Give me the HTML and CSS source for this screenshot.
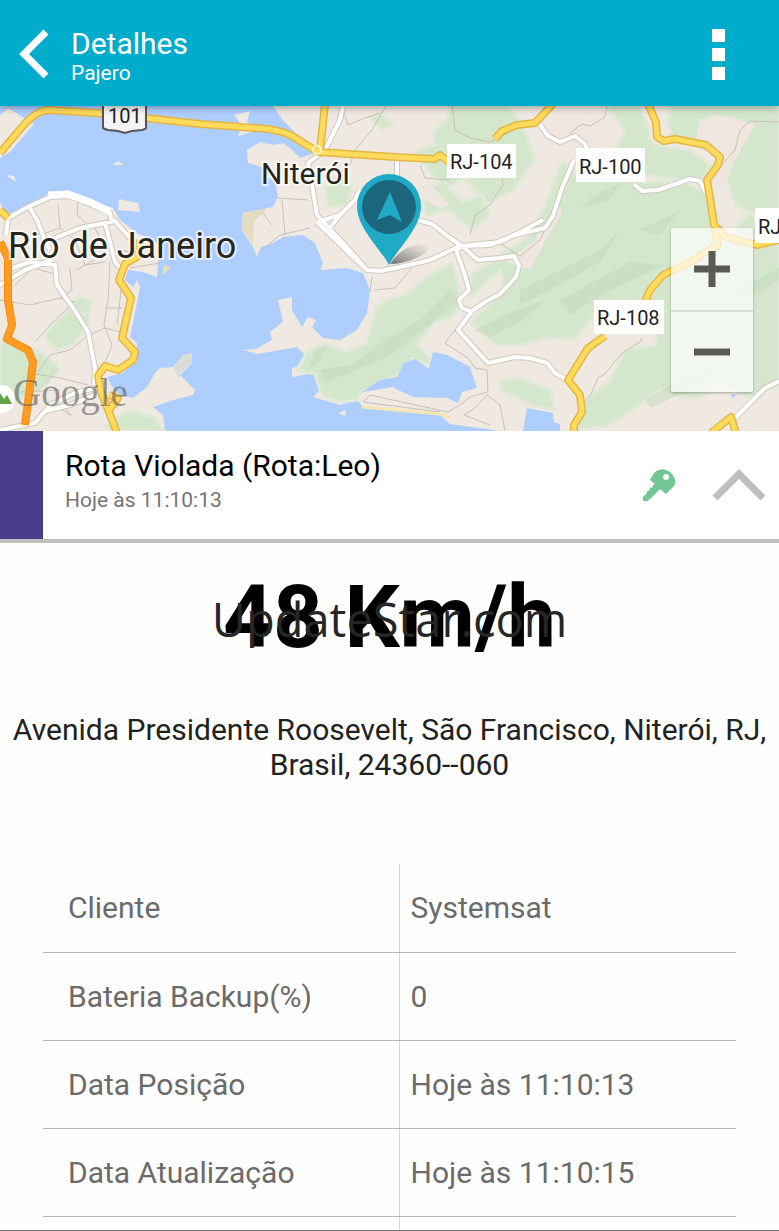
FILE: index.html
```html
<!DOCTYPE html>
<html lang="pt-BR">
<head>
    <meta charset="UTF-8">
    <meta name="viewport" content="width=device-width, initial-scale=1.0">
    <title>Detalhes - Pajero</title>
    <link rel="stylesheet" href="styles.css">
</head>
<body>
    <header>
        <button type="button" class="back" aria-label="Voltar">
            <svg width="32" height="50" viewBox="0 0 32 50"><path d="M27 3 L5 25 L27 47" fill="none" stroke="#fff" stroke-width="7"/></svg>
        </button>
        <div class="title">
            <h1>Detalhes</h1>
            <p>Pajero</p>
        </div>
        <button type="button" class="menu" aria-label="Menu">
            <span></span><span></span><span></span>
        </button>
    </header>

    <div class="map">
        <svg class="map-canvas" viewBox="0 106 779 325" preserveAspectRatio="xMidYMid slice">
            <defs>
                <linearGradient id="pinShadow" x1="0" y1="1" x2="1" y2="0">
                    <stop offset="0" stop-color="#555" stop-opacity="0.8"/>
                    <stop offset="1" stop-color="#777" stop-opacity="0"/>
                </linearGradient>
                <path id="streets" d="M6 235 L8 218 L30 206 L50 197 L68 196 L85 202 L110 213 L112 222 M30 208 L38 222 L44 238 L50 250 M6 270 L30 262 L55 265 L57 285 L76 312 L88 332 L95 368 L94 385 M50 240 L80 228 L115 221 L130 238 M105 222 L115 262 L120 268 M0 285 L25 270 L52 260
                    M0 430 L35 423 L50 405 L75 393 L95 388 M45 411 L70 405 L95 395
                    M343 106 L340 120 L325 150 L308 163 L312 185 L317 215 L345 245 L367 270 L380 271 L405 266 L430 260 L460 246 L490 245 L515 235 L545 228 L553 216 L562 188 L574 160
                    M317 222 L355 259 L367 270 M318 222 L340 215 L355 200 L360 190 M330 228 L340 215 M397 160 L397 178
                    M418 220 L432 224 L450 238 L462 246 L456 250 L465 275 L469 290 L459 300 L462 308 L472 312
                    M462 246 L478 260 L500 258 L514 256 L519 266 L516 277 L500 294 L485 302 L472 311 L458 330 L488 363 L515 357 L530 358 L547 363 L555 373 L567 380
                    M462 246 L500 242 L520 232 L543 220
                    M538 122 L548 136 L560 142 L575 136 L584 143 L588 150 M634 184 L642 191 L658 190 L690 179 L700 181 L706 193 M733 420 L765 388 L779 381"/>
                <path id="highways" d="M0 153 L22 127 Q36 110 50 110 L110 114 L200 124 L255 128 Q285 129 300 141 L318 152 L395 157 L435 159 L440 155 L450 163
                    M325 104 L320 150 M495 139 L502 131 L517 125 L535 123 L553 104
                    M648 104 L656 122 L657 137 L664 141 L675 139 L706 145 L720 157 L718 165 L707 180 L711 205 L714 225 L726 237 L757 245 L779 240
                    M714 228 L718 245 L690 262 L663 275 L650 290 L645 302 M605 336 L588 348 L568 380 L580 395 L582 412 L574 425 L574 433
                    M0 210 L8 218 M140 240 L138 256 L125 264 L119 280 L131 298 L122 338 L135 352 L133 360 L118 370 L105 366 L98 376 L101 392 L109 412 L117 433 M109 395 L118 398 L109 410
                    M711 433 L731 417 L736 433"/>
                <path id="orange" d="M0 242 L8 258 L8 300 L12 325 L7 339 L28 350 L33 362 L29 395 L25 425"/>
            </defs>
            <rect x="0" y="106" width="779" height="325" fill="#aeceff"/>

            <!-- land -->
            <g fill="#efe9e2">
                <path d="M0 115 L8 108 L34 124 L10 152 L0 158Z"/>
                <path d="M0 203 L7 215 L50 193 L70 193 L113 208 L120 220 L137 233 L157 243 L158 262 L157 277 L143 272 L128 270 L125 280 L133 287 L137 280 L140 287 L135 313 L130 337 L137 343 L136 360 L123 373 L107 377 L113 388 L120 395 L133 398 L147 387 L155 373 L160 368 L173 367 L183 355 L192 353 L192 363 L180 375 L195 390 L193 395 L173 400 L153 407 L163 415 L165 431 L0 431Z"/>
                <path d="M273 106 L283 120 L300 138 L318 152 L300 158 L290 148 L283 143 L274 145 L260 142 L247 150 L248 163 L262 167 L266 177 L275 180 L278 197 L273 207 L243 213 L242 230 L253 247 L257 257 L261 247 L273 243 L283 237 L303 235 L315 243 L323 263 L320 270 L347 268 L363 273 L370 290 L367 313 L357 330 L340 340 L323 338 L312 327 L316 320 L308 317 L302 327 L292 310 L292 297 L278 300 L283 322 L270 332 L272 340 L256 349 L243 350 L257 354 L297 347 L305 355 L307 363 L292 368 L292 377 L313 373 L320 390 L313 397 L340 405 L357 400 L363 407 L440 415 L450 424 L500 431 L779 431 L779 106Z"/>
                <path d="M234 115 L250 111 L247 122 L258 130 L238 136 L242 126Z"/>
                <path d="M119 199 L138 203 L140 212 L118 210Z"/>
                <path d="M112 165 L118 161 L124 165Z"/>
                <path d="M6 175 L14 176 L16 182Z"/>
                <path d="M338 413 L346 410 L345 416Z"/>
                <path d="M164 265 L171 267 L162 276Z" fill="#e5e0b9"/>
            </g>
            <path d="M173 367 L183 355 L192 353 L192 363 L180 373 L180 380Z" fill="#d9ddd5"/>
            <path d="M243 213 L268 208 L254 222 L253 244 L242 230Z" fill="#e4dcc0"/>

            <!-- vegetation -->
            <g class="green">
                <path d="M0 345 L10 330 L22 345 L40 352 L58 365 L48 383 L20 400 L0 408Z"/>
                <path d="M44 335 L60 318 L75 305 L90 310 L88 328 L72 345 L55 350Z"/>
                <path d="M68 305 L80 296 L92 300 L90 312 L76 316Z"/>
                <path d="M105 425 L130 410 L155 418 L164 431 L110 431Z"/>
                <path d="M377 306 L390 298 L405 295 L425 278 L452 262 L460 290 L458 310 L450 318 L435 322 L417 345 L430 358 L430 366 L412 358 L397 375 L362 392 L357 400 L338 402 L322 396 L315 374 L297 370 L307 352 L325 343 L345 352 L366 343Z"/>
                <path d="M470 275 L490 262 L530 235 L545 205 L562 160 L582 180 L620 175 L650 182 L690 180 L710 190 L725 240 L779 180 L779 385 L750 398 L720 385 L695 400 L660 390 L640 405 L610 425 L575 431 L585 400 L610 380 L625 350 L655 345 L660 310 L625 300 L598 310 L575 340 L550 338 L520 345 L495 345 L470 322 L505 290 L500 270 L470 298Z"/>
                <path d="M452 106 L510 106 L525 130 L535 160 L514 190 L485 205 L465 178 L445 190 L428 170 L415 150 L435 145 L433 132 L445 120Z"/>
                <path d="M605 106 L640 106 L655 145 L690 150 L710 165 L700 182 L640 175 L610 160 L625 130Z"/>
                <path d="M670 106 L779 106 L779 230 L735 205 L720 160 L695 142 L665 140Z"/>
                <path d="M422 188 L445 182 L462 202 L482 195 L490 215 L472 230 L448 210 L425 215Z"/>
                <path d="M325 188 L340 178 L352 185 L348 205 L328 208Z"/>
                <path d="M370 119 L380 112 L395 125 L382 130Z"/>
                <path d="M500 380 L520 378 L550 390 L555 410 L530 405 L518 398 L500 390Z"/>
            </g>
            <g class="hills">
                <path d="M385 340 L420 320 L450 290 L458 300 L430 325 L390 355 L345 375 L325 382 L320 370 L350 365Z"/>
                <path d="M520 290 L560 270 L600 250 L620 230 L600 262 L560 285 L520 305Z"/>
                <path d="M475 330 L510 312 L545 300 L520 322 L490 337Z"/>
                <path d="M590 198 L622 182 L608 200 L582 208Z"/>
                <path d="M560 300 L630 262 L665 265 L610 290 L570 315Z"/>
                <path d="M645 400 L690 375 L725 365 L690 390 L650 408Z"/>
                <path d="M640 230 L680 210 L660 235Z"/>
                <path d="M735 290 L779 268 L779 280 L745 300Z"/>
                <path d="M45 383 L55 366 L60 370 L40 390 L20 400Z"/>
                <path d="M315 350 L328 345 L320 360 L308 370Z"/>
            </g>
            <!-- built-up patches inside the green -->
            <g fill="#efe6df">
                <path d="M700 120 L715 115 L735 118 L755 125 L735 160 L725 185 L705 178 L718 160 L695 142Z"/>
                <path d="M418 190 L432 186 L450 205 L440 208 L425 200Z"/>
                <path d="M550 125 L580 112 L605 112 L622 125 L600 148 L580 155 L548 140Z"/>
                <path d="M648 138 L660 118 L672 130 L662 145Z"/>
                <path d="M680 180 L705 178 L722 185 L712 198 L695 188Z"/>
                <path d="M552 212 L560 206 L562 214 L550 232 L530 270 L505 262 L535 240Z"/>
            </g>

            <!-- lagoons -->
            <g fill="#aeceff">
                <path d="M362 392 L380 380 L397 377 L404 363 L415 359 L429 369 L433 352 L447 355 L470 367 L477 388 L462 392 L458 403 L447 398 L413 397 L392 387 L370 391Z"/>
                <path d="M527 408 L553 413 L554 422 L560 424 L560 431 L523 431Z"/>
                <path d="M730 395 L737 394 L733 398Z"/>
            </g>
            <path d="M362 407 L440 414 L450 418" fill="none" stroke="#f6e7b0" stroke-width="3"/>

            <!-- minor streets -->
            <path class="lane" d="M33 213 L40 235 L60 228 L58 205 M78 200 L77 215 L92 228 L108 220 M60 228 L75 240 L85 265 L105 262 M95 228 L105 248 L130 252
                M0 300 L30 305 L60 298 L74 302 L50 325 L35 342 M15 285 L33 268 L58 275 M70 268 L72 290 L60 298
                M110 262 L108 300 L104 325 L112 345 L104 365 M105 308 L122 308 M122 270 L120 300 L117 325 M85 337 L105 328 L120 332 M38 372 L50 355 L70 350 L85 338 M36 374 L60 378 L88 385
                M160 263 L130 268 M76 270 L95 260 M20 392 L60 390 M62 410 L72 415 M65 405 L70 417
                M342 106 L348 125 L365 118 L380 113 M386 106 L372 130 L355 150 L350 165 M278 198 L308 200 M282 200 L285 235 M262 250 L280 235 L310 228 M262 212 L272 225 M370 292 L372 277 M374 290 L395 288 L412 268
                M452 106 L455 130 L470 138 L490 142 L510 132 M420 165 L425 178 L450 180 M500 165 L503 185 L490 205 L475 215 L470 235
                M570 133 L582 124 L590 126 L605 117 L607 106 M552 215 L540 240 L520 256 L500 243 M715 172 L735 150 L740 130 L750 121 L779 122
                M455 330 L445 343 L468 358 L475 368 L487 370 L488 392 L470 397 L460 405 L448 412 L370 395 L363 402 L440 412 M487 395 L475 408 L464 415 L490 425 M487 395 L500 405 L505 431
                M642 338 L640 342 L622 353 L605 374 L598 378 L590 396 L584 402"/>

            <!-- main streets and highways -->
            <use href="#streets" class="street-edge"/>
            <use href="#streets" class="street"/>
            <path d="M48 195 L68 194 L90 202 L110 212" fill="none" stroke="#fff" stroke-width="7"/>
            <use href="#highways" class="road-edge"/>
            <use href="#highways" class="road"/>
            <use href="#orange" class="orange-edge"/>
            <use href="#orange" class="orange"/>
            <circle cx="317" cy="150" r="4" fill="none" stroke="#fff6c8" stroke-width="2"/>

            <!-- road shields -->
            <path d="M103 104 V128 Q104 129 108 130 L118 131 L125 133 L132 131 L142 130 Q146 129 146 128 V104Z" fill="#f4f4f4" stroke="#555" stroke-width="2"/>
            <g class="shield">
                <rect x="447" y="144" width="69" height="34"/>
                <rect x="576" y="148" width="69" height="34"/>
                <rect x="594" y="300" width="70" height="34"/>
                <rect x="755" y="208" width="60" height="35"/>
                <text x="108" y="123">101</text>
                <text x="450" y="169">RJ-104</text>
                <text x="579" y="174">RJ-100</text>
                <text x="597" y="325">RJ-108</text>
                <text x="758" y="234">RJ</text>
            </g>

            <text class="city" x="261" y="184">Niterói</text>
            <text class="city city-big" x="8" y="258">Rio de Janeiro</text>

            <circle cx="1" cy="399" r="14" fill="#fff"/>
            <path d="M-8 404 L0 393 L4 399 L7 395 L12 404Z" fill="#5fa544"/>
            <text class="logo" x="13" y="406">Google</text>

            <!-- vehicle marker -->
            <path d="M390 264 Q404 242 428 245 Q430 253 414 259 Q402 264 390 264Z" fill="url(#pinShadow)"/>
            <path d="M389 265 C380 248 357 228 357 206 A32 32 0 0 1 421 206 C421 228 398 248 389 265Z" fill="#20aac6"/>
            <circle cx="389" cy="207" r="27" fill="#1c677d"/>
            <path d="M390 192 L402 222 L390 215 L377 220Z" fill="#20aac6"/>
        </svg>
        <div class="zoom">
            <button type="button" aria-label="Aproximar">
                <svg width="36" height="36" viewBox="0 0 36 36"><path d="M0 18 H36 M18 0 V36" stroke="#585b56" stroke-width="7"/></svg>
            </button>
            <button type="button" aria-label="Afastar">
                <svg width="36" height="36" viewBox="0 0 36 36"><path d="M0 18 H36" stroke="#585b56" stroke-width="7"/></svg>
            </button>
        </div>
    </div>

    <div class="event">
        <div class="event-color"></div>
        <div class="event-text">
            <h2>Rota Violada (Rota:Leo)</h2>
            <p>Hoje às 11:10:13</p>
        </div>
        <svg class="key" width="34" height="34" viewBox="0 0 34 34">
            <path fill="#71c694" fill-rule="evenodd" d="M8 12 L12 5 Q20 -2 28 4 Q36 12 32 18 L24 26 L18 21 L8 31 Q5 34 2 33 Q0 32 1 29 L5 25 L5 23 L8 22 L8 20 L11 19 L11 17 L13 16Z M24 6 A3 3 0 1 0 24 12 A3 3 0 1 0 24 6Z"/>
        </svg>
        <button type="button" class="collapse" aria-label="Recolher">
            <svg width="54" height="34" viewBox="0 0 54 34"><path d="M3 30 L27 6 L51 30" fill="none" stroke="#bfbfbf" stroke-width="7"/></svg>
        </button>
    </div>

    <main>
        <div class="speed">
            <strong>48 Km/h</strong>
            <span class="watermark">UpdateStar.com</span>
        </div>
        <p class="address">Avenida Presidente Roosevelt, São Francisco, Niterói, RJ, Brasil, 24360--060</p>
        <table>
            <tbody>
                <tr>
                    <th scope="row">Cliente</th>
                    <td>Systemsat</td>
                </tr>
                <tr>
                    <th scope="row">Bateria Backup(%)</th>
                    <td>0</td>
                </tr>
                <tr>
                    <th scope="row">Data Posição</th>
                    <td>Hoje às 11:10:13</td>
                </tr>
                <tr>
                    <th scope="row">Data Atualização</th>
                    <td>Hoje às 11:10:15</td>
                </tr>
                <tr>
                    <th scope="row"></th>
                    <td></td>
                </tr>
            </tbody>
        </table>
    </main>
</body>
</html>
```
FILE: styles.css
```css
* {
    box-sizing: border-box;
}
body {
    font-family: Roboto, sans-serif;
    margin: 0;
    height: 100vh;
    display: flex;
    flex-direction: column;
    overflow: hidden;
    background-color: #fefefe;
    border-bottom: 1px solid #777;
}
h1, h2, p {
    margin: 0;
    font-weight: 400;
}
button {
    padding: 0;
    border: none;
    background: none;
    cursor: pointer;
}
svg {
    display: block;
}
header {
    flex: none;
    height: 106px;
    display: flex;
    align-items: center;
    padding: 2px 52px 0 19px;
    background-color: #00accb;
    color: white;
    position: relative;
    z-index: 1;
    box-shadow: 0 1px 8px rgba(0, 0, 0, 0.4);
}
.title {
    flex: 1;
    margin-left: 20px;
    padding-top: 4px;
}
.title h1 {
    font-size: 30px;
    line-height: 34px;
}
.title p {
    font-size: 21px;
    line-height: 24px;
}
.menu {
    display: flex;
    flex-direction: column;
    gap: 6px;
    padding: 0 2px;
}
.menu span {
    width: 13px;
    height: 13px;
    background-color: white;
}
.map {
    flex: none;
    height: 325px;
    position: relative;
}
.map-canvas {
    width: 100%;
    height: 100%;
}
.green {
    fill: #d4e7cd;
    stroke: #e2e9d9;
    stroke-width: 3;
    stroke-linejoin: round;
}
.hills {
    fill: #c4dbba;
    opacity: 0.5;
}
.lane, .street-edge, .street, .road-edge, .road, .orange-edge, .orange {
    fill: none;
    stroke-linejoin: round;
}
.lane {
    stroke: #c9c1b9;
    stroke-width: 1px;
}
.street-edge {
    stroke: #d0c8be;
    stroke-width: 6;
}
.street {
    stroke: white;
    stroke-width: 4;
}
.road-edge {
    stroke: #e5b544;
    stroke-width: 8;
}
.road {
    stroke: #ffdb5c;
    stroke-width: 5;
}
.orange-edge {
    stroke: #f08c18;
    stroke-width: 8;
}
.orange {
    stroke: #ff9c20;
    stroke-width: 6;
}
.shield rect {
    fill: white;
}
.shield text {
    font-size: 20px;
    fill: #222;
}
.city {
    font-size: 30px;
    fill: #26251c;
    stroke: rgba(255, 255, 255, 0.7);
    stroke-width: 4px;
    paint-order: stroke;
}
.city-big {
    font-size: 36px;
}
.logo {
    font-family: "Liberation Serif", serif;
    font-size: 39px;
    fill: rgba(90, 90, 90, 0.6);
}
.zoom {
    position: absolute;
    right: 26px;
    bottom: 39px;
    width: 82px;
    border-radius: 2px;
    background-color: rgba(255, 255, 255, 0.7);
    box-shadow: 0 1px 3px rgba(0, 0, 0, 0.3);
}
.zoom button {
    width: 100%;
    height: 82px;
    display: flex;
    align-items: center;
    justify-content: center;
}
.zoom button + button {
    border-top: 2px solid rgba(190, 200, 190, 0.5);
}
.event {
    flex: none;
    display: flex;
    align-items: center;
    height: 112px;
    padding-right: 13px;
    background-color: white;
    border-bottom: 4px solid #bfbfbf;
}
.event-color {
    align-self: stretch;
    width: 43px;
    background-color: #483d8b;
}
.event-text {
    flex: 1;
    padding: 0 0 6px 22px;
}
.event-text h2 {
    font-size: 30px;
    line-height: 36px;
    color: #000;
}
.event-text p {
    font-size: 21px;
    line-height: 32px;
    color: #757575;
}
.key {
    margin-right: 36px;
}
main {
    flex: 1;
    min-height: 0;
    overflow: hidden;
}
.speed {
    position: relative;
    margin-top: 24px;
    text-align: center;
    color: #000;
}
.speed strong {
    display: block;
    font-size: 87px;
    line-height: 100px;
}
.watermark {
    position: absolute;
    top: 22px;
    left: 0;
    right: 0;
    font-family: "Open Sans", sans-serif;
    font-size: 47px;
    line-height: 60px;
    color: #262626;
}
.address {
    margin-top: 45px;
    padding: 0 8px;
    font-size: 30px;
    line-height: 35px;
    text-align: center;
    color: #222;
}
table {
    width: calc(100% - 86px);
    margin: 82px 43px 0;
    table-layout: fixed;
    border-collapse: collapse;
    font-size: 30px;
    color: #6b6b6b;
}
th, td {
    height: 88px;
    padding: 0 0 0 11px;
    border-bottom: 1px solid #b5b5b5;
    font-weight: 400;
    text-align: left;
}
th {
    width: 356px;
    padding-left: 25px;
    border-right: 1px solid #d5d5d5;
}
```
